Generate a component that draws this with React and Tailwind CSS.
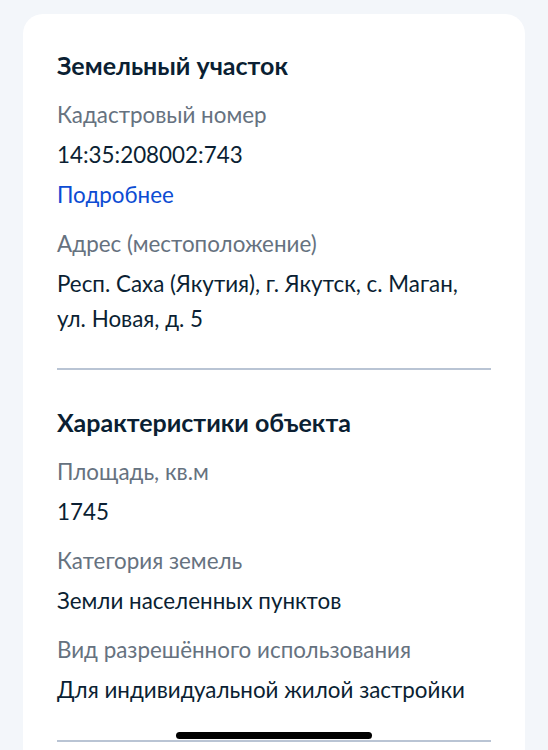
export default function App() {
  const font = { fontFamily: "Lato, 'Noto Sans', sans-serif" };

  const Field = ({ label, children, className = "" }) => (
    <div className={"flex flex-col " + className}>
      <div className="text-[22.4px] leading-[30px] text-[#66727f]">{label}</div>
      <div className="mt-[7px] text-[22.4px] leading-[35px] text-[#0b1f33]">{children}</div>
    </div>
  );

  return (
    <div className="relative h-[750px] overflow-hidden bg-[#f3f6fa] px-[23px] pt-[14px]" style={font}>
      <div className="rounded-[20px] bg-white px-[34px] pt-[36px] pb-[40px]">
        {/* Земельный участок */}
        <h2 className="text-[25px] leading-[30px] font-bold text-[#0b1f33]">Земельный участок</h2>
        <Field label="Кадастровый номер" className="mt-[20px]">
          <div>14:35:208002:743</div>
          <div className="mt-[5px] text-[#0d4cd3]">Подробнее</div>
        </Field>
        <Field label="Адрес (местоположение)" className="mt-[17px]">
          Респ. Саха (Якутия), г. Якутск, с. Маган, ул. Новая, д. 5
        </Field>

        <div className="mt-[32px] h-[2px] bg-[#b9c4d4]" />

        {/* Характеристики */}
        <h2 className="mt-[37px] text-[25px] leading-[30px] font-bold text-[#0b1f33]">Характеристики объекта</h2>
        <Field label="Площадь, кв.м" className="mt-[20px]">1745</Field>
        <Field label="Категория земель" className="mt-[17px]">Земли населенных пунктов</Field>
        <Field label="Вид разрешённого использования" className="mt-[17px]">
          Для индивидуальной жилой застройки
        </Field>

        <div className="mt-[33px] h-[2px] bg-[#b9c4d4]" />
      </div>

      {/* home indicator */}
      <div className="absolute left-1/2 top-[732px] h-[7px] w-[196px] -translate-x-1/2 rounded-full bg-black" />
    </div>
  );
}
